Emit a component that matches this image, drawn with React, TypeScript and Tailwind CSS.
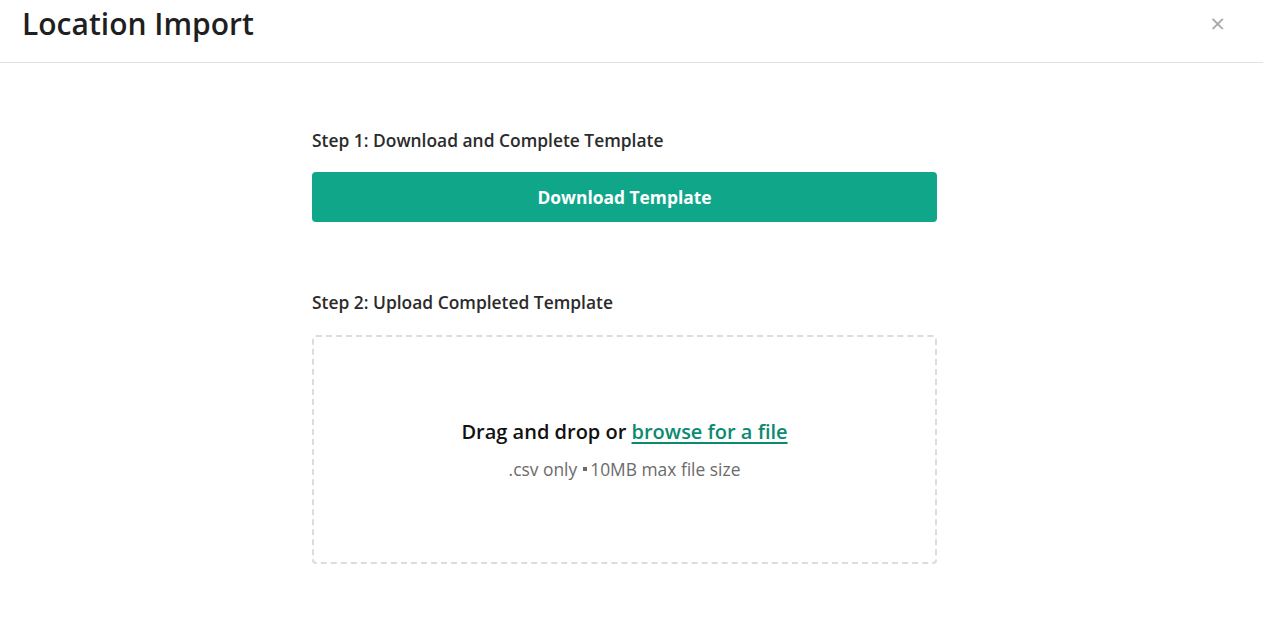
export default function App() {
  return (
    <div
      className="min-h-[626px] w-full bg-white text-[#1f1f1f]"
      style={{ fontFamily: '"Open Sans", sans-serif' }}
    >
      <header className="flex h-[63px] items-start justify-between border-b border-[#dde3e8] pl-[22px] pr-[38px]">
        <h1 className="mt-[4px] text-[30px] font-semibold leading-[40px] text-[#1f1f1f]">
          Location Import
        </h1>
        <button className="mt-[10px] text-[26px] leading-[26px] text-[#a8a8a8]" aria-label="Close">
          ×
        </button>
      </header>

      <div className="flex justify-center pr-[14px]">
        <main className="flex w-[625px] flex-col pt-[65px]">
          <h2 className="text-[17.4px] font-semibold leading-[24px] text-[#2b2b2b]">
            Step 1: Download and Complete Template
          </h2>
          <button className="mt-[20px] h-[50px] w-full rounded-[4px] bg-[#10a68a] text-[17.4px] font-bold text-white">
            Download Template
          </button>

          <h2 className="mt-[68px] text-[17.4px] font-semibold leading-[24px] text-[#2b2b2b]">
            Step 2: Upload Completed Template
          </h2>
          <div className="mt-[21px] flex h-[229px] w-full flex-col items-center justify-center rounded-[4px] border-2 border-dashed border-[#dcdcdc]">
            <p className="-mt-[2px] text-[20px] font-semibold leading-[28px] text-[#111]">
              Drag and drop or{" "}
              <a href="#" className="text-[#0b8a70] underline underline-offset-[3px]">
                browse for a file
              </a>
            </p>
            <p className="mt-[12px] flex items-center text-[17.4px] leading-[22px] text-[#6b6b6b]">
              .csv only
              <span className="ml-[6px] mr-[3px] inline-block h-[4px] w-[4px] bg-[#6b6b6b]" />
              10MB max file size
            </p>
          </div>
        </main>
      </div>
    </div>
  );
}
